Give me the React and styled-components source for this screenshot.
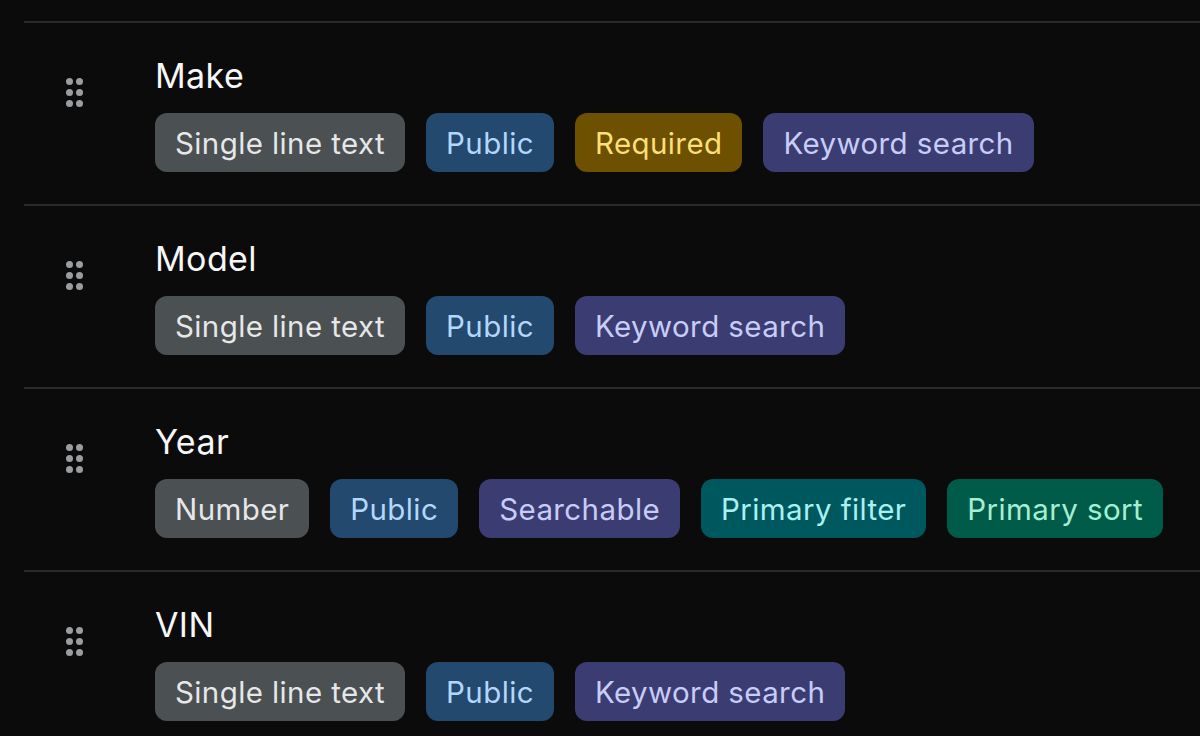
import React from "react"
import styled, { createGlobalStyle } from "styled-components"

const GlobalStyle = createGlobalStyle`
  html, body {
    margin: 0;
    padding: 0;
    background: #0b0b0b;
    overflow: hidden;
  }
  body {
    font-family: Inter, "Noto Sans", "Liberation Sans", sans-serif;
    -webkit-font-smoothing: antialiased;
  }
`

const Page = styled.div`
  height: 736px;
  padding-top: 21px;
  padding-left: 24px;
  box-sizing: border-box;
`

const List = styled.ul`
  list-style: none;
  margin: 0;
  padding: 0;
`

const Row = styled.li`
  display: flex;
  align-items: flex-start;
  height: 183px;
  box-sizing: border-box;
  border-top: 2px solid #2a2a2a;
  padding: 34px 0 0 42px;
`

const Handle = styled.div`
  display: grid;
  grid-template-columns: repeat(2, 7px);
  grid-auto-rows: 7px;
  gap: 4px 3px;
  margin-top: 21px;
  margin-right: 72px;
  cursor: grab;
`

const Dot = styled.span`
  border-radius: 50%;
  background: #9b9ea0;
`

const Body = styled.div`
  display: flex;
  flex-direction: column;
  gap: 18px;
`

const Title = styled.div`
  font-size: 34px;
  line-height: 38px;
  font-weight: 400;
  letter-spacing: 0.4px;
  color: #f6f6f6;
`

const Tags = styled.div`
  display: flex;
  gap: 21px;
`

const palette = {
  gray: ["#4b5052", "#e5e7e8"],
  blue: ["#23496f", "#b2d7fb"],
  amber: ["#6d5000", "#fbdf78"],
  indigo: ["#3b3d72", "#c8ccf8"],
  cyan: ["#00585f", "#a8f1f2"],
  teal: ["#005b48", "#a4efd3"],
}

const Tag = styled.span`
  display: inline-flex;
  align-items: center;
  height: 59px;
  padding: 0 20px;
  border-radius: 12px;
  font-size: 29.5px;
  letter-spacing: 0.4px;
  font-weight: 400;
  white-space: nowrap;
  background: ${(p) => palette[p.$tone][0]};
  color: ${(p) => palette[p.$tone][1]};
`

const fields = [
  {
    name: "Make",
    tags: [
      ["Single line text", "gray"],
      ["Public", "blue"],
      ["Required", "amber"],
      ["Keyword search", "indigo"],
    ],
  },
  {
    name: "Model",
    tags: [
      ["Single line text", "gray"],
      ["Public", "blue"],
      ["Keyword search", "indigo"],
    ],
  },
  {
    name: "Year",
    tags: [
      ["Number", "gray"],
      ["Public", "blue"],
      ["Searchable", "indigo"],
      ["Primary filter", "cyan"],
      ["Primary sort", "teal"],
    ],
  },
  {
    name: "VIN",
    tags: [
      ["Single line text", "gray"],
      ["Public", "blue"],
      ["Keyword search", "indigo"],
    ],
  },
]

const App = () => {
  return (
    <>
      <GlobalStyle />
      <Page>
        <List>
          {fields.map((field) => (
            <Row key={field.name}>
              <Handle>
                {[0, 1, 2, 3, 4, 5].map((i) => (
                  <Dot key={i} />
                ))}
              </Handle>
              <Body>
                <Title>{field.name}</Title>
                <Tags>
                  {field.tags.map(([label, tone]) => (
                    <Tag key={label} $tone={tone}>
                      {label}
                    </Tag>
                  ))}
                </Tags>
              </Body>
            </Row>
          ))}
        </List>
      </Page>
    </>
  )
}

export default App
